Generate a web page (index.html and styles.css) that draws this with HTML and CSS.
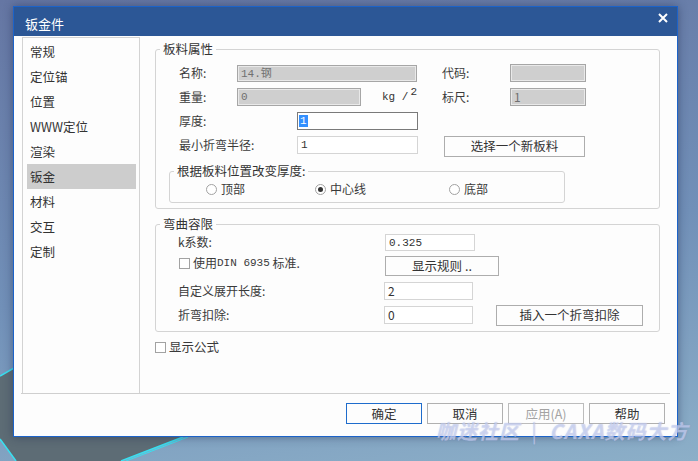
FILE: index.html
```html
<!DOCTYPE html>
<html>
<head>
<meta charset="utf-8">
<link rel="stylesheet" href="styles.css">
</head>
<body>
<div class="desktop">
  <svg class="scenery" width="698" height="461" viewBox="0 0 698 461">
    <polygon points="0,376 14,368 14,437 183,437 121,461 16,461 0,439" fill="#5d6c75"/>
    <polyline points="0,376 14,368" stroke="#39e0f0" stroke-width="1.5" fill="none"/>
    <polyline points="0,439 16,461" stroke="#39e0f0" stroke-width="1.5" fill="none"/>
    <polyline points="183,437 121,461" stroke="#39e0f0" stroke-width="1.5" fill="none"/>
    <polyline points="188,437 126,461" stroke="#39e0f0" stroke-width="1" fill="none"/>
  </svg>
  <div class="dialog">
    <div class="titlebar">
      <span class="title">钣金件</span>
      <svg class="close" width="10" height="10" viewBox="0 0 10 10"><path d="M1 1 L9 9 M9 1 L1 9" stroke="#fff" stroke-width="2"/></svg>
    </div>
    <div class="client">
      <div class="main">
        <ul class="nav">
          <li>常规</li>
          <li>定位锚</li>
          <li>位置</li>
          <li>WWW定位</li>
          <li>渲染</li>
          <li class="sel">钣金</li>
          <li>材料</li>
          <li>交互</li>
          <li>定制</li>
        </ul>
        <div class="panel">
          <fieldset class="group g-sheet">
            <legend>板料属性</legend>
            <div class="grid-sheet">
              <span class="lbl">名称:</span>
              <span class="field dis mono w-name">14.钢</span>
              <span class="lbl">代码:</span>
              <span class="field dis w-code"></span>

              <span class="lbl">重量:</span>
              <span class="cell-weight"><span class="field dis mono w-weight">0</span><span class="unit">kg /<sup>2</sup></span></span>
              <span class="lbl">标尺:</span>
              <span class="field dis w-code">1</span>

              <span class="lbl">厚度:</span>
              <span class="field focus mono w-thick"><span class="selected">1</span></span>
              <span></span>
              <span></span>

              <span class="lbl">最小折弯半径:</span>
              <span class="field mono w-thick">1</span>
              <span class="btn w-select">选择一个新板料</span>
            </div>
            <fieldset class="group g-pos">
              <legend>根据板料位置改变厚度:</legend>
              <div class="radios">
                <span class="radio"><span class="dot"></span>顶部</span>
                <span class="radio"><span class="dot on"></span>中心线</span>
                <span class="radio"><span class="dot"></span>底部</span>
              </div>
            </fieldset>
          </fieldset>

          <fieldset class="group g-bend">
            <legend>弯曲容限</legend>
            <div class="grid-bend">
              <span class="lbl">k系数:</span>
              <span class="field mono w-k">0.325</span>
              <span></span>

              <span class="check top3"><span class="box"></span>使用<span class="mono">DIN 6935</span>&nbsp;标准.</span>
              <span class="btn w-rules top4">显示规则 ..</span>

              <span class="lbl">自定义展开长度:</span>
              <span class="field w-len">2</span>
              <span></span>

              <span class="lbl">折弯扣除:</span>
              <span class="field w-len">0</span>
              <span class="btn w-insert">插入一个折弯扣除</span>
            </div>
          </fieldset>

          <div class="check formula"><span class="box"></span>显示公式</div>
        </div>
      </div>
      <div class="sep"></div>
      <div class="footer">
        <span class="btn fbtn default">确定</span>
        <span class="btn fbtn">取消</span>
        <span class="btn fbtn disabled">应用(A)</span>
        <span class="btn fbtn">帮助</span>
      </div>
    </div>
  </div>
  <div class="watermark">咖迷社区 <span class="bar">|</span> CAXA数码大方</div>
</div>
</body>
</html>
```

FILE: styles.css
```css
* { box-sizing: border-box; }

html, body {
  margin: 0;
  padding: 0;
}

body {
  width: 698px;
  height: 461px;
  overflow: hidden;
  font-family: "Noto Sans CJK SC", "Noto Sans", sans-serif;
  font-size: 12px;
  color: #3a3a3a;
  background: linear-gradient(172deg, #6576a3 0%, #7190b8 55%, #8cafc8 100%);
}

.desktop {
  position: relative;
  width: 698px;
  height: 461px;
  padding: 6px 0 0 13px;
}

.scenery {
  position: absolute;
  left: 0;
  top: 0;
  z-index: 0;
}

.dialog {
  position: relative;
  z-index: 1;
  width: 665px;
  height: 431px;
  border: 1px solid #1c63c9;
  background: #fdfdfd;
  box-shadow: 0 0 9px rgba(25, 35, 70, 0.45);
}

.titlebar {
  height: 29px;
  background: #2c5796;
  display: flex;
  align-items: flex-start;
  justify-content: space-between;
  padding: 0 9px 0 11px;
  color: #fff;
}

.title {
  margin-top: 9px;
  font-size: 13px;
  line-height: 16px;
}

.close {
  margin-top: 6px;
}

.client {
  height: 400px;
}

.main {
  display: flex;
  height: 357px;
}

.nav {
  list-style: none;
  margin: 1px 0 0 8px;
  width: 118px;
  height: 356px;
  border: 1px solid #d3d3d3;
  border-bottom: none;
  padding: 1px 3px 0 4px;
}

.nav li {
  height: 25px;
  line-height: 25px;
  padding-left: 3px;
  font-size: 12.5px;
  color: #333;
}

.nav li.sel {
  background: #cdcdcd;
}

.panel {
  flex: 1;
  padding: 5px 17px 0 15px;
}

.group {
  margin: 0;
  padding: 0;
  border: 1px solid #d4d4d4;
  border-radius: 3px;
  min-width: 0;
}

.group legend {
  margin-left: 4px;
  padding: 0 3px;
  font-size: 12.5px;
  line-height: 16px;
  color: #333;
}

.g-sheet {
  width: 505px;
}

.grid-sheet {
  display: grid;
  grid-template-columns: 58px 205px 68px 1fr;
  grid-auto-rows: 24px;
  align-items: center;
  padding: 4px 0 0 23px;
}

.lbl {
  white-space: nowrap;
  line-height: 16px;
}

.field {
  display: block;
  height: 18px;
  border: 1px solid #d5d5d5;
  background: #fff;
  padding: 0 3px;
  font-size: 12px;
  line-height: 16px;
  color: #333;
  white-space: nowrap;
  overflow: hidden;
}

.mono {
  font-family: "Liberation Mono", "Noto Sans CJK SC", monospace;
  font-size: 11px;
}

.field.dis {
  background: #cfcfcf;
  border-color: #a6a6a6;
  box-shadow: inset 0 0 0 1px #e9e9e9;
  color: #707070;
}

.field.focus {
  border-color: #7a7a7a;
  padding-left: 1px;
}

.selected {
  background: #3390ff;
  color: #fff;
  padding: 0 1px;
}

.w-name { width: 180px; height: 17px; }
.w-code { width: 76px; }
.w-weight { width: 124px; }
.w-thick { width: 121px; margin-left: 60px; }

.cell-weight {
  display: flex;
  align-items: center;
}

.unit {
  margin-left: 21px;
  font-family: "Liberation Mono", monospace;
  font-size: 11px;
  line-height: 16px;
  color: #333;
}

.unit sup {
  font-size: 11px;
  vertical-align: 5px;
  margin-left: 2px;
  line-height: 0;
}

.btn {
  display: flex;
  align-items: center;
  justify-content: center;
  border: 1px solid #adadad;
  background: #fdfdfd;
  font-size: 12.5px;
  line-height: 16px;
  color: #333;
  white-space: nowrap;
}

.w-select {
  grid-column: 3 / 5;
  width: 141px;
  height: 21px;
  margin-left: 2px;
  margin-top: 2px;
}

.g-pos {
  margin: 6px 0 5px 13px;
  width: 396px;
}

.radios {
  display: grid;
  grid-template-columns: 109px 134px 1fr;
  height: 20px;
  align-items: center;
  padding-left: 36px;
  margin-bottom: 3px;
}

.radio {
  display: flex;
  align-items: center;
  line-height: 16px;
}

.dot {
  width: 11px;
  height: 11px;
  border: 1px solid #a2a2a2;
  border-radius: 50%;
  background: #fff;
  margin-right: 4px;
  display: flex;
  align-items: center;
  justify-content: center;
}

.dot.on::after {
  content: "";
  width: 5px;
  height: 5px;
  border-radius: 50%;
  background: #333;
}

.g-bend {
  width: 505px;
  margin-top: 7px;
}

.grid-bend {
  display: grid;
  grid-template-columns: 207px 111px 1fr;
  grid-template-rows: 20px 27px 24px 24px;
  align-items: center;
  padding: 0 0 4px 22px;
}

.check {
  display: flex;
  align-items: center;
  line-height: 16px;
  white-space: nowrap;
}

.box {
  width: 11px;
  height: 11px;
  border: 1px solid #a2a2a2;
  background: #fff;
  margin-right: 3px;
}

.top3 { align-self: start; margin-top: 3px; margin-left: 1px; }
.top4 { align-self: start; margin-top: 4px; }

.w-k { width: 90px; height: 17px; }
.w-rules { width: 114px; height: 20px; grid-column: 2 / 4; }
.w-len { width: 89px; margin-left: -1px; }
.w-insert { width: 147px; height: 21px; }

.formula {
  margin-top: 7px;
  font-size: 12.5px;
}

.formula .box {
  margin-right: 3px;
}

.sep {
  height: 1px;
  background: #cfcfcf;
  margin: 0 7px;
}

.footer {
  display: flex;
  justify-content: flex-end;
  gap: 5px;
  padding: 9px 12px 0 0;
}

.fbtn {
  width: 76px;
  height: 21px;
  border-color: #b0b0b0;
}

.fbtn.default {
  border-color: #1e6ccc;
}

.fbtn.disabled {
  color: #a3a3a3;
  border-color: #bcbcbc;
}

.watermark {
  position: absolute;
  left: 436px;
  top: 420px;
  z-index: 2;
  font-family: "Noto Sans CJK SC", sans-serif;
  font-size: 20px;
  font-weight: bold;
  font-style: italic;
  line-height: 22px;
  letter-spacing: 1px;
  color: rgba(236, 238, 255, 0.5);
  text-shadow: 0 0 1px rgba(110, 130, 200, 0.6);
  white-space: nowrap;
}

.watermark .bar {
  font-style: normal;
  font-weight: normal;
  margin: 0 6px;
}
```
